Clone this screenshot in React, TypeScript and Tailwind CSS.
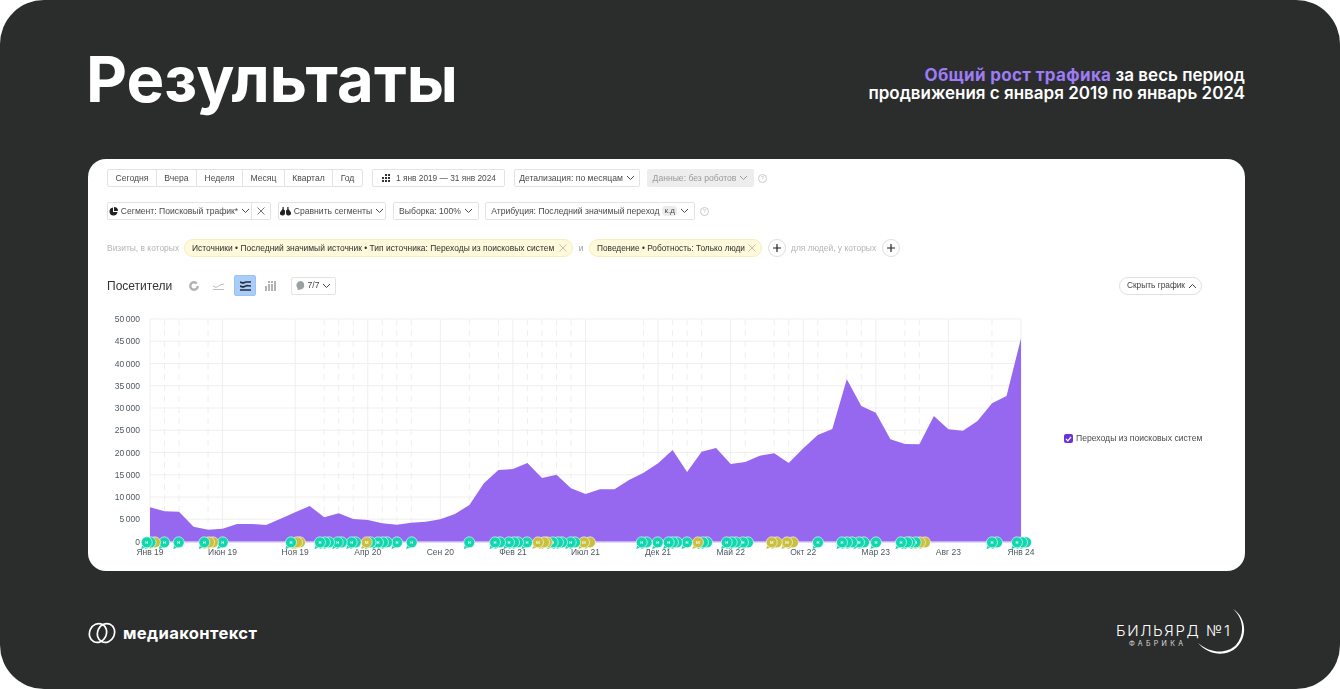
import React from "react";

const ys = [507.3,511.3,511.7,526.7,529.7,528.7,524,524,525,518.7,512.3,506,517.3,513.3,519,520,523.3,524.7,522.7,521.7,519.3,514,505,483.3,470,469,463,478,474.7,488.3,494,489.3,489.3,480,472.7,463.3,450,472,451.7,448,464,462,455.7,453.3,463,448.3,435,429,379.3,406,412.7,439.3,444,444.3,416,429.3,430.7,421,403.3,396,338.3];
const X0 = 150;
const STEP = 871 / 60;
const xAt = (i: number) => X0 + i * STEP;
const BASE = 541.5;
const area = `M${X0} ${BASE} ` + ys.map((y, i) => `L${xAt(i).toFixed(1)} ${y}`).join(" ") + ` L1021 ${BASE} Z`;
const yLabels = ["50\u2009000","45\u2009000","40\u2009000","35\u2009000","30\u2009000","25\u2009000","20\u2009000","15\u2009000","10\u2009000","5\u2009000","0"];
const xLabels = ["Янв 19","Июн 19","Ноя 19","Апр 20","Сен 20","Фев 21","Июл 21","Дек 21","Май 22","Окт 22","Мар 23","Авг 23","Янв 24"];
const dashed = [1,2,4,12,13,14,16,17,18,22,24,26,27,28,29,34,36,37,38,41,43,44,46,48,49,52,53,58];

const T = "#12d6ae";
const Y = "#c9c03f";
// x, colour, leading bubble of a stack
const bubbles: [number, string, boolean][] = [
  [146.7,T,true],[150.5,T,false],[155,Y,false],[164.3,T,true],[178.7,T,true],
  [204.3,T,true],[209,Y,false],[213,Y,false],[222.7,T,true],
  [291,T,true],[297,Y,false],[300,Y,false],
  [320,T,true],[325,T,false],[329,T,false],[337.7,T,true],[341.7,T,false],[351.7,T,true],[355.7,T,false],
  [366.7,Y,true],[370.5,T,false],[378,T,true],[383,T,false],[387,T,false],[397,T,true],[411.7,T,true],
  [469.3,T,true],[495,T,true],[500,T,false],[509,T,true],[514,T,false],[518,T,false],[527,T,true],
  [538,Y,true],[544,Y,false],[547,Y,false],[552.7,T,true],[558,T,false],[562,T,false],[570.7,T,true],[575,T,false],
  [584,Y,true],[590,Y,false],[641.7,T,true],[646.7,T,false],[657.7,T,true],[668.7,T,true],[673,T,false],[677,T,false],
  [687,T,true],[698,Y,true],[703,T,false],[707,T,false],[726.7,T,true],[731.7,T,false],[736,T,false],[743,T,true],[748,T,false],
  [771.7,Y,true],[776.7,Y,false],[787,Y,true],[793,Y,false],[818,T,true],
  [842,T,true],[847,T,false],[852,T,false],[859,T,true],[864,T,false],[876,T,true],
  [901,T,true],[907,T,false],[910,T,false],[915.7,T,true],[920,Y,false],[925,Y,false],
  [992,T,true],[997,T,false],[1017,T,true],[1022,T,false],[1026,T,false],
];

const Chev = ({ up = false, className = "" }: { up?: boolean; className?: string }) => (
  <svg width="9" height="6" viewBox="0 0 9 6" className={className} fill="none" stroke="currentColor" strokeWidth="1">
    <path d={up ? "M1 5l3.5-3.5L8 5" : "M1 1l3.5 3.5L8 1"} />
  </svg>
);

const Help = () => (
  <span className="flex h-[9px] w-[9px] items-center justify-center rounded-full border border-[#c9c9c9] text-[6px] leading-none text-[#c4c4c4]">?</span>
);

const Btn = ({ w, children, className = "" }: { w: string; children: React.ReactNode; className?: string }) => (
  <div className={`flex h-[18px] items-center justify-center gap-[3px] whitespace-nowrap rounded-[2px] border border-[#e3e3e3] bg-white text-[#4a4a4a] ${w} ${className}`}>{children}</div>
);

const Seg = ({ w, children, last = false }: { w: string; children: React.ReactNode; last?: boolean }) => (
  <div className={`flex h-full items-center justify-center ${w} ${last ? "" : "border-r border-[#e3e3e3]"}`}>{children}</div>
);

const X = ({ size = 8, color = "#555" }: { size?: number; color?: string }) => (
  <svg width={size} height={size} viewBox="0 0 8 8" fill="none" stroke={color} strokeWidth="0.8"><path d="M.5.5l7 7M7.5.5l-7 7" /></svg>
);

const Plus = () => (
  <div className="flex h-[18px] w-[18px] items-center justify-center rounded-full border border-[#dedede] bg-white">
    <svg width="8" height="8" viewBox="0 0 8 8" fill="none" stroke="#222" strokeWidth="1.2"><path d="M4 0v8M0 4h8" /></svg>
  </div>
);

const Chip = ({ w, children, size = "text-[8.45px]" }: { w: string; children: React.ReactNode; size?: string }) => (
  <div className={`flex h-[18px] items-center justify-between whitespace-nowrap rounded-full border border-[#f7eebc] bg-[#fff9dc] pl-[7px] pr-[5px] text-[#2f2f2f] ${size} ${w}`}>
    <span>{children}</span>
    <X color="#b8b19a" />
  </div>
);

function Chart() {
  return (
    <svg viewBox="107 310 930 255" width="930" height="255" className="mt-[14px] shrink-0" style={{ fontFamily: '"Liberation Sans", Arial, sans-serif' }}>
      {yLabels.map((_, i) => (
        <line key={i} x1="150" x2="1021" y1={319 + i * 22.25} y2={319 + i * 22.25} stroke="#efefef" strokeWidth="1" />
      ))}
      {dashed.map((i) => (
        <line key={i} x1={xAt(i)} x2={xAt(i)} y1="319" y2={BASE} stroke="#efefef" strokeDasharray="6 5" />
      ))}
      {xLabels.map((_, i) => (
        <line key={i} x1={xAt(i * 5)} x2={xAt(i * 5)} y1="319" y2={BASE} stroke="#efefef" />
      ))}
      <path d={area} fill="#9667ef" />
      <line x1="150" x2="1021" y1={BASE + 0.5} y2={BASE + 0.5} stroke="#c9b3f5" />
      {yLabels.map((t, i) => (
        <text key={t} x="140" y={322 + i * 22.25} textAnchor="end" fontSize="8.5" fill="#4c5860">{t}</text>
      ))}
      {xLabels.map((t, i) => (
        <text key={t} x={xAt(i * 5)} y="555" textAnchor="middle" fontSize="8.5" fill="#4c5860">{t}</text>
      ))}
      {[...bubbles].reverse().map(([x, c, lead], i) => (
        <g key={i}>
          <path d={`M${x - 4.5} 545.5 L${x - 5.5} 549 L${x} 547.3 Z`} fill={c} />
          <circle cx={x} cy="542.3" r="5.5" fill={c} stroke="#fff" strokeWidth="0.6" />
          {lead && (
            <text x={x} y="544.3" textAnchor="middle" fontSize="5.5" fill="#fff">{c === T ? "н" : "м"}</text>
          )}
        </g>
      ))}
    </svg>
  );
}

export default function App() {
  return (
    <div className="flex h-[689px] w-[1340px] flex-col overflow-hidden rounded-[44px] bg-[#2b2c2c] pl-[88px] pr-[95px] text-white" style={{ fontFamily: '"Liberation Sans", Arial, sans-serif' }}>
      <header className="flex h-[159px] shrink-0 items-center justify-between">
        <h1 className="-ml-[2px] mt-[1px] text-[63.4px] font-bold leading-none [font-family:Inter,sans-serif]">Результаты</h1>
        <p className="mt-[9px] text-right text-[17px] font-semibold leading-[18.5px] [font-family:Inter,sans-serif]">
          <span className="font-bold tracking-[0.33px] text-[#9d7cf6]">Общий рост трафика</span> за весь период
          <br />
          продвижения с января 2019 по январь 2024
        </p>
      </header>

      <main className="flex h-[412px] shrink-0 flex-col rounded-[18px] bg-white pl-[19px] pr-[43px] pt-[10px] text-[8.6px] leading-none blur-[0.3px]">
        <div className="flex items-center">
          <div className="flex h-[18px] items-center rounded-[2px] border border-[#e3e3e3] text-[#4a4a4a]">
            <Seg w="w-[49px]">Сегодня</Seg>
            <Seg w="w-[40px]">Вчера</Seg>
            <Seg w="w-[46px]">Неделя</Seg>
            <Seg w="w-[42px]">Месяц</Seg>
            <Seg w="w-[48px]">Квартал</Seg>
            <Seg w="w-[29px]" last>Год</Seg>
          </div>
          <Btn w="w-[133px]" className="ml-[9px] gap-[5px] text-[8.3px]">
            <svg width="10" height="8" viewBox="0 0 10 8" fill="#333"><path d="M4 0h2v2H4zM7 0h2v2H7zM1 3h2v2H1zM4 3h2v2H4zM7 3h2v2H7zM1 6h2v2H1zM4 6h2v2H4zM7 6h2v2H7z" /></svg>
            1 янв 2019 — 31 янв 2024
          </Btn>
          <Btn w="w-[126px]" className="ml-[9px]">Детализация: по месяцам <Chev /></Btn>
          <div className="ml-[7px] flex h-[18px] w-[107px] items-center justify-center gap-[3px] rounded-[2px] bg-[#ededed] text-[#9a9a9a]">Данные: без роботов <Chev /></div>
          <div className="ml-[4px]"><Help /></div>
        </div>

        <div className="mt-[15px] flex items-center">
          <div className="flex h-[18px] items-center rounded-[2px] border border-[#e3e3e3] text-[#4a4a4a]">
            <div className="flex h-full w-[144px] items-center justify-center gap-[3px] whitespace-nowrap border-r border-[#e3e3e3]">
              <svg width="9" height="9" viewBox="0 0 9 9" fill="#222"><path d="M4 .5A4 4 0 1 0 8.5 5H4zM5 0v4h4a4 4 0 0 0-4-4z" /></svg>
              Сегмент: Поисковый трафик* <Chev />
            </div>
            <div className="flex h-full w-[18px] items-center justify-center"><X /></div>
          </div>
          <Btn w="w-[108px]" className="ml-[7px]">
            <svg width="11" height="9" viewBox="0 0 11 9" fill="#222"><path d="M2.5 0h1.2v2.6l1.3.8V6a2.5 2.5 0 1 1-4.9-.7L2.5 2zM8.5 0H7.3v2.6L6 3.4V6a2.5 2.5 0 1 0 4.9-.7L8.5 2z" /></svg>
            Сравнить сегменты <Chev />
          </Btn>
          <Btn w="w-[86px]" className="ml-[7px]">Выборка: 100% <Chev /></Btn>
          <Btn w="w-[210px]" className="ml-[6px]">
            Атрибуция: Последний значимый переход
            <span className="rounded-[4px] bg-[#ececec] px-[2px] py-[1px] text-[8px]">к.д</span>
            <Chev />
          </Btn>
          <div className="ml-[5px]"><Help /></div>
        </div>

        <div className="mt-[19px] flex h-[18px] items-center text-[8.45px]">
          <span className="w-[77px] whitespace-nowrap text-[#b4b4b4]">Визиты, в которых</span>
          <Chip w="w-[389px]">Источники • Последний значимый источник • Тип источника: Переходы из поисковых систем</Chip>
          <span className="w-[16px] text-center text-[#9a9a9a]">и</span>
          <Chip w="w-[173px]" size="text-[8.3px]">Поведение • Роботность: Только люди</Chip>
          <div className="ml-[6px]"><Plus /></div>
          <span className="ml-[5px] w-[91px] whitespace-nowrap text-[#b4b4b4]">для людей, у которых</span>
          <Plus />
        </div>

        <div className="mt-[18px] flex h-[21px] items-center">
          <span className="w-[82px] text-[12px] text-[#333]">Посетители</span>
          <svg width="10" height="10" viewBox="0 0 10 10" fill="none" stroke="#aeb2b5" strokeWidth="2.4"><circle cx="5" cy="5" r="3.7" strokeDasharray="20 3.3" /></svg>
          <svg width="12" height="8" viewBox="0 0 12 8" fill="none" stroke="#b6babd" strokeWidth="0.9" className="ml-[14px]"><path d="M0 4l3 1.5L7 3l4-1M0 7.5h11" /></svg>
          <div className="ml-[9px] flex h-[21px] w-[22px] items-center justify-center rounded-[2px] border border-[#9cc3f0] bg-[#a9cdf8]">
            <svg width="11" height="10" viewBox="0 0 11 10" fill="none" stroke="#243040" strokeWidth="1.7"><path d="M0 1l3 1 3-1 5 0M0 5l3 1 4-1.5L11 5M0 9h11" /></svg>
          </div>
          <svg width="11" height="10" viewBox="0 0 11 10" fill="#b0b4b7" className="ml-[9px]"><path d="M0 5h2v5H0zM3 0h2v2H3zM3 3h2v7H3zM6 0h2v2H6zM6 3h2v7H6zM9 0h2v10H9z" /></svg>
          <div className="ml-[15px] flex h-[18px] w-[45px] items-center justify-center gap-[3px] rounded-[2px] border border-[#e3e3e3] text-[#444]">
            <svg width="9" height="9" viewBox="0 0 9 9" fill="#9ba0a3"><path d="M4.5 0a4.3 4.3 0 0 1 0 8.5l-3.5.5.8-1.6A4.3 4.3 0 0 1 4.5 0z" /></svg>
            7/7 <Chev />
          </div>
          <div className="ml-auto flex h-[18px] w-[83px] items-center justify-center gap-[3px] rounded-full border border-[#e0e0e0] pl-[3px] text-[8.3px] text-[#444]">Скрыть график <Chev up /></div>
        </div>

        <div className="flex items-start">
          <Chart />
          <div className="ml-[27px] mt-[138px] flex items-center gap-[3px] whitespace-nowrap text-[#4a4a4a]">
            <div className="flex h-[9px] w-[9px] items-center justify-center rounded-[2px] bg-[#6a32dc]">
              <svg width="7" height="6" viewBox="0 0 7 6" fill="none" stroke="#fff" strokeWidth="1.2"><path d="M1 3l1.8 1.8L6 1" /></svg>
            </div>
            Переходы из поисковых систем
          </div>
        </div>
      </main>

      <footer className="flex flex-1 items-center justify-between pt-[6px]">
        <div className="flex items-center gap-[7px]">
          <svg width="28" height="22" viewBox="0 0 28 22" fill="none" stroke="#fff" strokeWidth="1.7">
            <ellipse cx="10" cy="11" rx="8.4" ry="9.6" transform="rotate(25 10 11)" />
            <ellipse cx="18" cy="11" rx="8.4" ry="9.6" transform="rotate(25 18 11)" />
          </svg>
          <span className="text-[16.6px] font-bold leading-none tracking-[0.35px] [font-family:Inter,sans-serif]">медиаконтекст</span>
        </div>
        <div className="relative h-[48px] w-[130px]">
          <div className="flex h-full flex-col items-start pl-[1px] pt-[14px]">
            <span className="whitespace-nowrap text-[15px] font-light leading-none tracking-[1.6px] [font-family:Inter,sans-serif]">БИЛЬЯРД №1</span>
            <span className="ml-[13px] mt-[2px] whitespace-nowrap text-[7px] leading-none tracking-[3.3px] text-[#dcdcdc] [font-family:Inter,sans-serif]">ФАБРИКА</span>
          </div>
          <svg width="52" height="50" viewBox="0 0 52 50" fill="#fff" className="absolute right-[-1px] top-[-1px]">
            <path d="M39 1C52 9 54 28 43 39 33 49 15 48 4 35 17 46 33 46 42 37 51 27 50 10 39 1z" />
          </svg>
        </div>
      </footer>
    </div>
  );
}
